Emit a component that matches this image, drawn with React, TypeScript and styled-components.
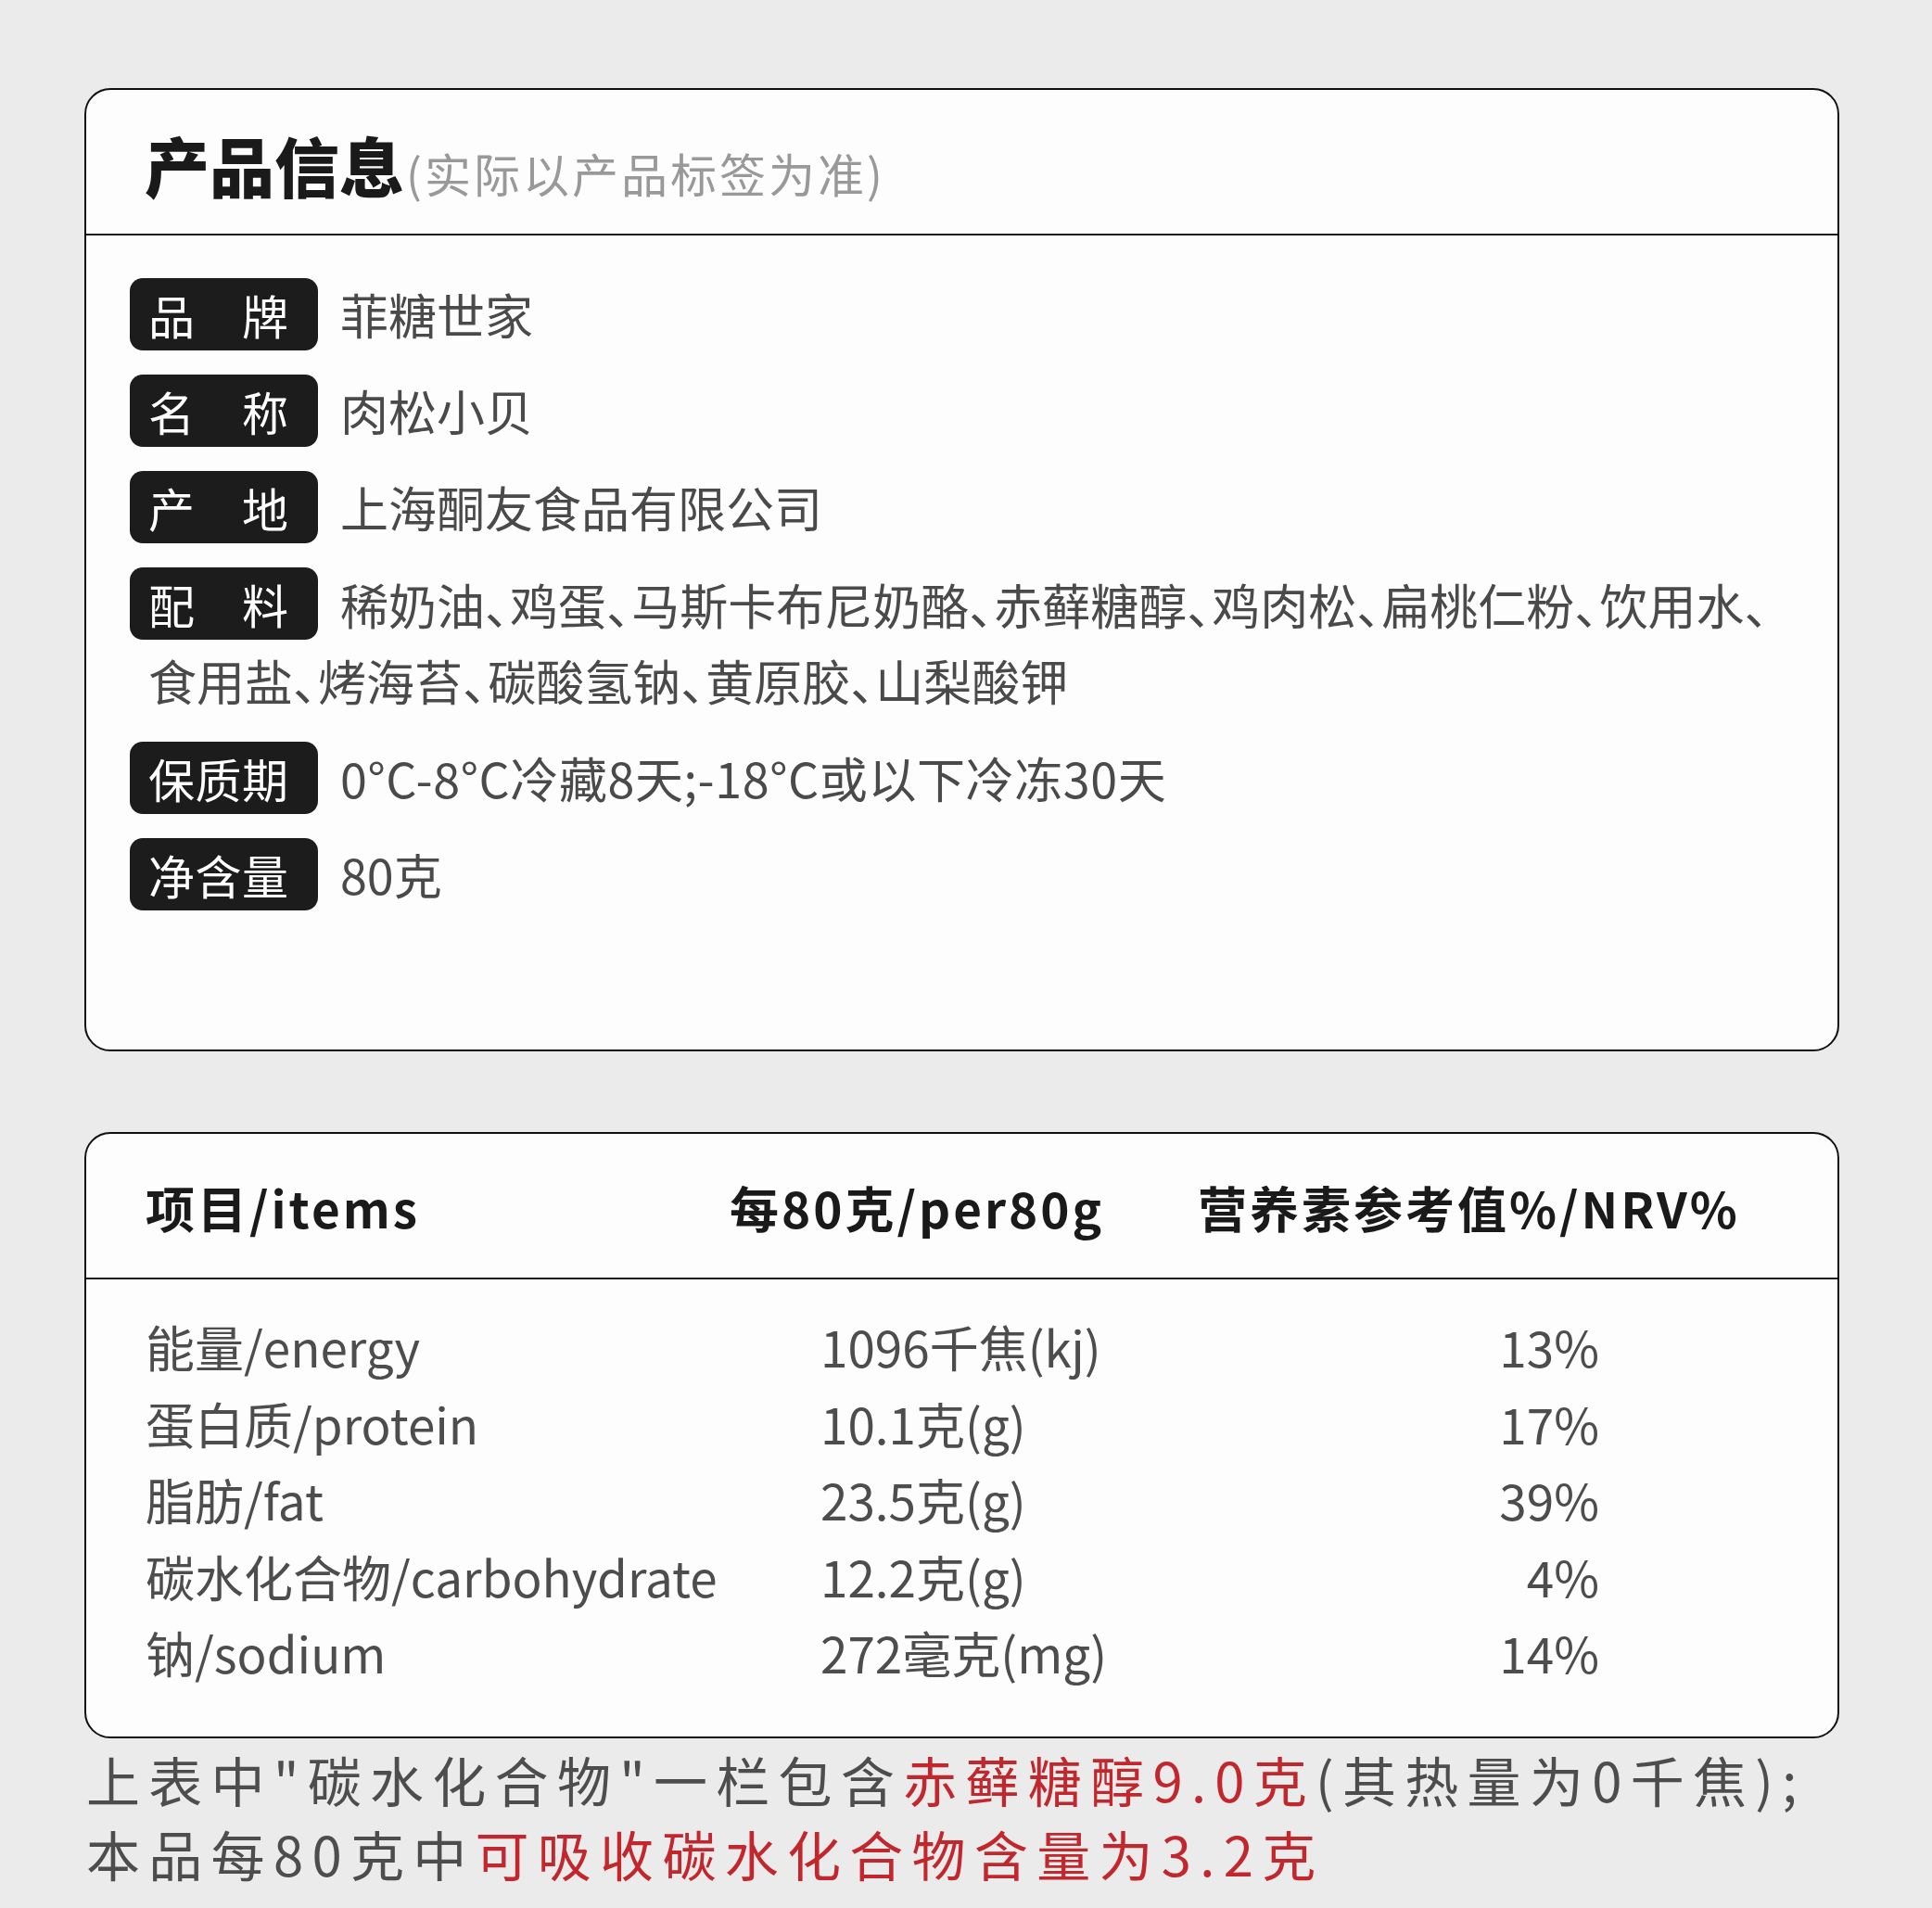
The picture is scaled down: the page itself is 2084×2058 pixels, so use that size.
import React from "react";
import styled, { createGlobalStyle } from "styled-components";

const GlobalStyle = createGlobalStyle`
    html, body {
        margin: 0;
        padding: 0;
        background: #ebebeb;
    }
    body {
        font-family: "Noto Sans CJK SC", "Noto Sans", sans-serif;
        color: #4d4d4d;
    }
`;

const Page = styled.div`
    width: 1893px;
    padding: 95px 0 0 91px;
`;

const Card = styled.section<{ $gap?: number }>`
    background: #fdfdfd;
    border: 2px solid #111;
    border-radius: 28px;
    overflow: hidden;
    margin-bottom: ${p => p.$gap ?? 0}px;
`;

const CardHeader = styled.div`
    height: 157px;
    border-bottom: 2px solid #1a1a1a;
    display: flex;
    align-items: center;
    padding: 6px 0 0 63px;
    box-sizing: border-box;
`;

const Title = styled.h1`
    margin: 0;
    font-size: 70px;
    font-weight: 900;
    color: #1a1a1a;
    line-height: 1;
    display: flex;
    align-items: baseline;
`;

const SubTitle = styled.span`
    font-size: 50px;
    font-weight: 400;
    color: #999;
    letter-spacing: 3px;
    margin-left: 2px;
`;

const InfoBody = styled.div`
    padding: 45px 50px 149px 67px;
`;

const InfoRow = styled.div<{ $lh?: number }>`
    font-size: 52px;
    line-height: ${p => p.$lh ?? 80}px;
    color: #4a4a4a;
    margin-bottom: 24px;

    &:last-child {
        margin-bottom: 0;
    }
`;

const Label = styled.span`
    display: inline-block;
    vertical-align: top;
    margin: 1px 24px 0 -20px;
    height: 78px;
    width: 151px;
    padding: 0 32px 0 20px;
    border-radius: 14px;
    background: #1c1c1c;
    color: #fff;
    font-size: 50px;
    line-height: 78px;
    text-align: justify;
    text-align-last: justify;
`;

const Sep = styled.span`
    letter-spacing: -0.48em;
`;

const Wide = styled.span`
    letter-spacing: 0.6px;
`;

const TableHead = styled.div`
    height: 157px;
    border-bottom: 2px solid #1a1a1a;
    display: grid;
    grid-template-columns: 630px 505px 1fr;
    align-items: center;
    padding: 2px 0 0 64px;
    box-sizing: border-box;
    font-size: 53px;
    font-weight: 700;
    letter-spacing: 3px;
    color: #1a1a1a;
`;

const TableBody = styled.div`
    padding: 31px 257px 49px 64px;
`;

const TableRow = styled.div`
    display: grid;
    grid-template-columns: 728px 1fr 200px;
    height: 82.5px;
    align-items: center;
    font-size: 53px;
    color: #4d4d4d;
`;

const Num = styled.span`
    text-align: right;
`;

const Note = styled.p`
    margin: 4px 0 0 2px;
    font-size: 58px;
    line-height: 80px;
    letter-spacing: 9.3px;
    color: #4d4d4d;
    white-space: nowrap;
`;

const Red = styled.span`
    color: #c1272d;
`;

type InfoItem = { label: string; value: React.ReactNode; lh?: number };

const info: InfoItem[] = [
    { label: "品牌", value: "菲糖世家" },
    { label: "名称", value: "肉松小贝" },
    { label: "产地", value: "上海酮友食品有限公司" },
    {
        label: "配料",
        lh: 82,
        value: (
            <>
                稀奶油<Sep>、</Sep>鸡蛋<Sep>、</Sep>马斯卡布尼奶酪<Sep>、</Sep>赤藓糖醇
                <Sep>、</Sep>鸡肉松<Sep>、</Sep>扁桃仁粉<Sep>、</Sep>饮用水<Sep>、</Sep>
                食用盐<Sep>、</Sep>烤海苔<Sep>、</Sep>碳酸氢钠<Sep>、</Sep>黄原胶
                <Sep>、</Sep>山梨酸钾
            </>
        ),
    },
    { label: "保质期", value: <Wide>0°C-8°C冷藏8天;-18°C或以下冷冻30天</Wide> },
    { label: "净含量", value: "80克" },
];

const nutrition = [
    ["能量/energy", "1096千焦(kj)", "13%"],
    ["蛋白质/protein", "10.1克(g)", "17%"],
    ["脂肪/fat", "23.5克(g)", "39%"],
    ["碳水化合物/carbohydrate", "12.2克(g)", "4%"],
    ["钠/sodium", "272毫克(mg)", "14%"],
];

const App = () => {
    return (
        <>
            <GlobalStyle />
            <Page>
                <Card $gap={87}>
                    <CardHeader>
                        <Title>
                            产品信息<SubTitle>(实际以产品标签为准)</SubTitle>
                        </Title>
                    </CardHeader>
                    <InfoBody>
                        {info.map(item => (
                            <InfoRow key={item.label} $lh={item.lh}>
                                <Label>{item.label}</Label>
                                {item.value}
                            </InfoRow>
                        ))}
                    </InfoBody>
                </Card>

                <Card>
                    <TableHead>
                        <span>项目/items</span>
                        <span>每80克/per80g</span>
                        <span>营养素参考值%/NRV%</span>
                    </TableHead>
                    <TableBody>
                        {nutrition.map(([name, amount, nrv]) => (
                            <TableRow key={name}>
                                <span>{name}</span>
                                <span>{amount}</span>
                                <Num>{nrv}</Num>
                            </TableRow>
                        ))}
                    </TableBody>
                </Card>

                <Note>
                    上表中"碳水化合物"一栏包含<Red>赤藓糖醇9.0克</Red>(其热量为0千焦);
                    <br />
                    本品每80克中<Red>可吸收碳水化合物含量为3.2克</Red>
                </Note>
            </Page>
        </>
    );
};

export default App;
